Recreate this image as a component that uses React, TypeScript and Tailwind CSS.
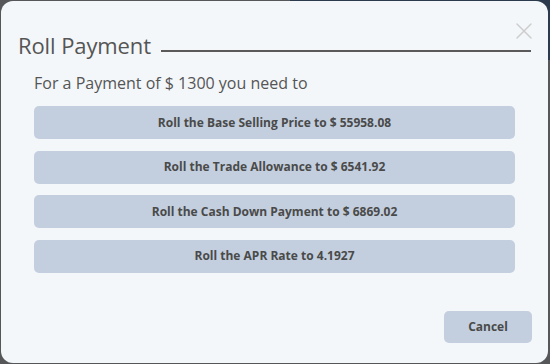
const rolls = [
  "Roll the Base Selling Price to $ 55958.08",
  "Roll the Trade Allowance to $ 6541.92",
  "Roll the Cash Down Payment to $ 6869.02",
  "Roll the APR Rate to 4.1927",
];

export default function App() {
  return (
    <div className="relative h-[364px] w-[550px] overflow-hidden bg-[#555759] font-['Open_Sans',sans-serif]">
      <div className="absolute right-0 top-0 h-[60px] w-[260px] bg-[#2b3a4d]" />
      <div className="relative ml-[1px] mt-[1px] flex h-[362px] w-[547px] flex-col rounded-[12px] bg-[#f3f7fa] px-[17px] pb-[20px] pt-[29px]">
        <button className="absolute right-[16px] top-[22px]">
          <svg width="16" height="16" viewBox="0 0 16 16" fill="none" stroke="#cdcdcd" strokeWidth="1.5" strokeLinecap="round">
            <path d="M1 1L15 15M15 1L1 15" />
          </svg>
        </button>

        <div className="flex items-end gap-[10px]">
          <h2 className="text-[22px] leading-[30px] tracking-[-0.1px] text-[#555555]">Roll Payment</h2>
          <div className="mb-[8px] h-[2px] flex-1 bg-[#5a5a5a]" />
        </div>

        <div className="px-[16px]">
          <p className="mt-[11px] text-[16px] leading-[24px] text-[#555555]">
            For a Payment of $ 1300 you need to
          </p>
          <div className="mt-[11px] flex flex-col gap-[11.5px]">
            {rolls.map((r) => (
              <button
                key={r}
                className="h-[33px] w-full rounded-[5px] bg-[#c3cfde] text-[12px] font-bold text-[#4a4a4a]"
              >
                {r}
              </button>
            ))}
          </div>
        </div>

        <div className="mt-auto flex justify-end">
          <button className="mr-[-1px] h-[32px] w-[88px] rounded-[5px] bg-[#c3cfde] text-[12px] font-bold text-[#4a4a4a]">
            Cancel
          </button>
        </div>
      </div>
    </div>
  );
}
